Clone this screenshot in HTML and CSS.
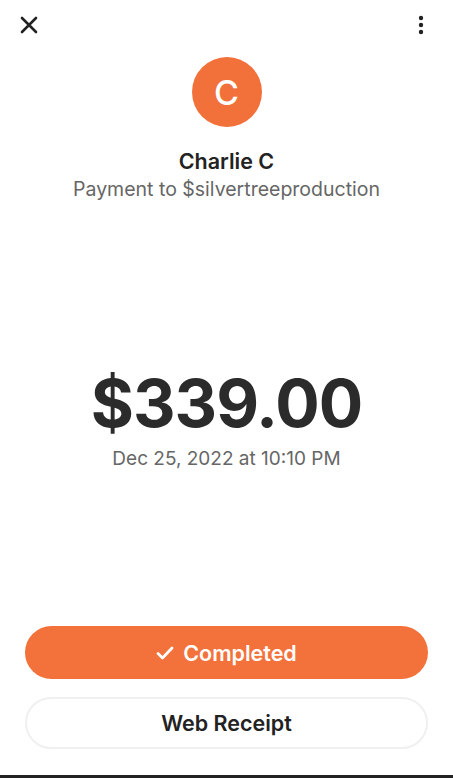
FILE: index.html
```html
<!DOCTYPE html>
<html lang="en">
<head>
    <meta charset="UTF-8">
    <meta name="viewport" content="width=device-width, initial-scale=1.0">
    <title>Payment</title>
    <link rel="stylesheet" href="styles.css">
</head>
<body>
    <div class="screen">
        <div class="topbar">
            <svg class="close" width="18" height="18" viewBox="0 0 18 18">
                <path d="M2 2 L16 16 M16 2 L2 16" stroke="#222" stroke-width="2.6" stroke-linecap="round"/>
            </svg>
            <svg class="more" width="6" height="20" viewBox="0 0 6 20">
                <circle cx="3" cy="3" r="2.2" fill="#222"/>
                <circle cx="3" cy="10" r="2.2" fill="#222"/>
                <circle cx="3" cy="17" r="2.2" fill="#222"/>
            </svg>
        </div>
        <div class="profile">
            <div class="avatar">C</div>
            <div class="name">Charlie C</div>
            <div class="subtitle">Payment to $silvertreeproduction</div>
        </div>
        <div class="amount-block">
            <div class="amount">$339.00</div>
            <div class="date">Dec 25, 2022 at 10:10 PM</div>
        </div>
        <div class="actions">
            <button class="btn btn-primary">
                <svg width="18" height="16" viewBox="0 0 18 16">
                    <path d="M2 8.5 L6.5 13 L16 3" stroke="#fff" stroke-width="2.8" fill="none" stroke-linecap="round" stroke-linejoin="round"/>
                </svg>
                Completed
            </button>
            <button class="btn btn-outline">Web Receipt</button>
        </div>
    </div>
    <div class="navbar"></div>
</body>
</html>
```

FILE: styles.css
```css
body {
    margin: 0;
    font-family: Inter, "Noto Sans", sans-serif;
    background-color: #ffffff;
    color: #222;
}

.screen {
    height: 775px;
    display: flex;
    flex-direction: column;
}

.navbar {
    height: 3px;
    background-color: #222;
}

.topbar {
    display: flex;
    justify-content: space-between;
    align-items: center;
    padding: 16px 29px 0 20px;
    height: 18px;
}

.profile {
    display: flex;
    flex-direction: column;
    align-items: center;
    margin-top: 23px;
}

.avatar {
    width: 70px;
    height: 70px;
    border-radius: 50%;
    background-color: #f2703a;
    color: #fff;
    font-size: 34px;
    font-weight: 500;
    display: flex;
    justify-content: center;
    align-items: center;
}

.name {
    margin-top: 21px;
    font-size: 21.5px;
    font-weight: 600;
    color: #222;
}

.subtitle {
    margin-top: 3px;
    font-size: 19.5px;
    color: #666;
}

.amount-block {
    display: flex;
    flex-direction: column;
    align-items: center;
    margin-top: 160px;
}

.amount {
    font-size: 66px;
    font-weight: 700;
    letter-spacing: -1px;
    line-height: 84px;
    color: #2b2b2b;
}

.date {
    margin-top: 2px;
    font-size: 19px;
    color: #666;
}

.actions {
    margin-top: auto;
    padding: 0 25px 26px 25px;
    display: flex;
    flex-direction: column;
    gap: 18px;
}

.btn {
    height: 53px;
    border-radius: 27px;
    font-family: inherit;
    font-size: 21.5px;
    font-weight: 600;
    display: flex;
    justify-content: center;
    align-items: center;
    gap: 9px;
}

.btn-primary {
    background-color: #f3713a;
    color: #fff;
    border: none;
}

.btn-outline {
    background-color: #fff;
    color: #222;
    border: 2px solid #f0f0f0;
    height: 52px;
}
```
